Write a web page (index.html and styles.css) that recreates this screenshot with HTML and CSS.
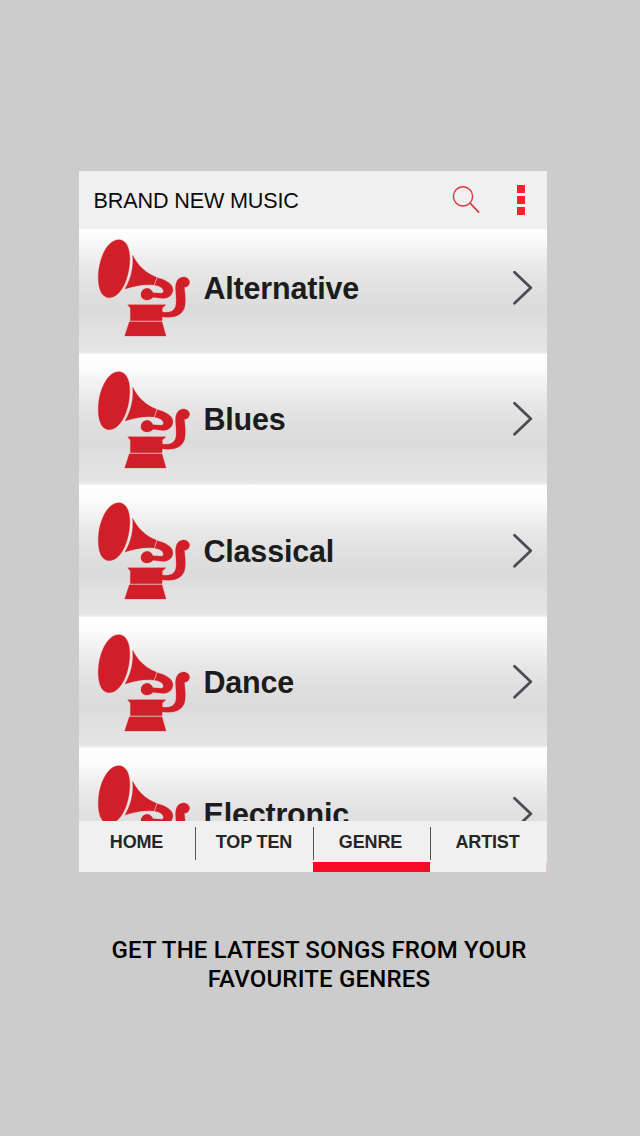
FILE: index.html
```html
<!DOCTYPE html>
<html lang="en">
<head>
<meta charset="utf-8">
<title>Brand New Music</title>
<link rel="stylesheet" href="styles.css">
</head>
<body>
<svg class="defs" aria-hidden="true">
  <symbol id="gramophone" viewBox="0 0 360 390">
    <g stroke="#eda9ac" stroke-width="3" stroke-linejoin="round" fill="#d01f28" paint-order="stroke">
      <path d="M104 44C126 46 137 74 134 113C130 170 104 218 72 218C46 218 36 181 41 136C48 82 74 42 104 44Z"/>
      <path d="M143 91C159 122 182 145 215 157L207 180C174 177 150 183 120 192C138 161 146 127 143 91Z"/>
      <path d="M217 158C246 165 264 178 264 195C262 214 246 222 229 220L204 217C199 223 191 226 184 225C173 224 167 216 168 207C169 197 177 190 187 190C194 190 200 195 204 203L228 205C235 204 237 199 234 194C231 187 221 182 209 181Z"/>
      <path d="M128 239H243L232 249V261C251 264 264 260 270 248C276 236 273 216 272 197C270 173 277 158 294 156C305 155 314 163 314 172C313 181 306 187 298 187C301 211 303 234 298 250C289 273 264 281 232 275L231 287H136V249Z"/>
      <path d="M133 290H231L243 333H119Z"/>
    </g>
  </symbol>
  <symbol id="chevron" viewBox="0 0 22 36">
    <path d="M2.5 2.3L18.8 17.8L2.5 33.3" fill="none" stroke="#4c4c55" stroke-width="2.8" stroke-linecap="round" stroke-linejoin="round"/>
  </symbol>
</svg>
<main class="screen">
  <section class="phone">
    <header class="bar">
      <h1 class="title">BRAND NEW MUSIC</h1>
      <svg class="search" viewBox="0 0 28 28"><g fill="none" stroke="#e0303c" stroke-width="1.4"><circle cx="11" cy="11.4" r="9.6"/><path d="M18 18L27 27.6" stroke-width="1.7"/></g></svg>
      <div class="more"><i class="dot"></i><i class="dot"></i><i class="dot"></i></div>
    </header>
    <div class="list">
      <div class="row"><svg class="icon"><use href="#gramophone"/></svg><span class="name">Alternative</span><svg class="go"><use href="#chevron"/></svg></div>
      <div class="row"><svg class="icon"><use href="#gramophone"/></svg><span class="name">Blues</span><svg class="go"><use href="#chevron"/></svg></div>
      <div class="row"><svg class="icon"><use href="#gramophone"/></svg><span class="name">Classical</span><svg class="go"><use href="#chevron"/></svg></div>
      <div class="row"><svg class="icon"><use href="#gramophone"/></svg><span class="name">Dance</span><svg class="go"><use href="#chevron"/></svg></div>
      <div class="row"><svg class="icon"><use href="#gramophone"/></svg><span class="name">Electronic</span><svg class="go"><use href="#chevron"/></svg></div>
    </div>
    <nav class="tabs">
      <div class="tab">HOME</div>
      <div class="tab">TOP TEN</div>
      <div class="tab active">GENRE</div>
      <div class="tab">ARTIST</div>
      <i class="edge"></i>
    </nav>
  </section>
  <p class="caption">GET THE LATEST SONGS FROM YOUR<br>FAVOURITE GENRES</p>
</main>
</body>
</html>
```
FILE: styles.css
```css
* { box-sizing: border-box; }
body {
  margin: 0;
  background: #ccc;
  font-family: "Liberation Sans", Arial, sans-serif;
}
.defs { display: none; }
.screen {
  height: 1136px;
  padding-top: 171px;
  display: flex;
  flex-direction: column;
  align-items: center;
}
.phone {
  width: 468px;
  height: 701px;
  margin-right: 14px;
  display: flex;
  flex-direction: column;
  overflow: hidden;
  background: #f0f0f0;
}
.bar {
  height: 58px;
  flex: none;
  display: flex;
  align-items: center;
  padding: 0 22px 0 14.5px;
}
.title {
  margin: 0;
  padding-top: 2px;
  flex: 1;
  font-size: 21.6px;
  font-weight: 400;
  letter-spacing: -0.15px;
  color: #0c0c0c;
}
.search { width: 28px; height: 28px; margin: 0 37px 3px 0; }
.more { display: grid; gap: 3px; margin-bottom: 1px; }
.dot { width: 8px; height: 8px; background: #fb2229; }
.list { height: 592px; flex: none; overflow: hidden; }
.row {
  height: 131.5px;
  display: flex;
  align-items: center;
  padding: 0 13px 0 6px;
  background: linear-gradient(#fff 0, #fdfdfd 10%, #f4f4f4 20%, #e6e6e6 38%, #dfdfdf 54%, #dbdbdb 68%, #e0e0e0 80%, #e5e5e5 98%, #f4f4f4 100%);
}
.row:first-child { margin-top: -7px; }
.icon { width: 120px; height: 130px; margin-top: 5px; }
.name {
  flex: 1;
  margin-left: -1.5px;
  padding-top: 1px;
  font-size: 30.5px;
  font-weight: 700;
  letter-spacing: -0.2px;
  color: #1c1c1c;
}
.go { width: 22px; height: 36px; }
.tabs {
  position: relative;
  height: 51px;
  flex: none;
  display: grid;
  grid-template-columns: 116px 118px 117px 117px;
}
.tab {
  position: relative;
  padding: 11px 2px 0 0;
  text-align: center;
  font-size: 18px;
  line-height: 21px;
  font-weight: 700;
  letter-spacing: -0.15px;
  color: #262626;
}
.tab:first-child { padding-right: 1px; }
.tab:nth-child(2) { padding-right: 0; }
.tab + .tab::before {
  content: "";
  position: absolute;
  left: 0;
  top: 6px;
  width: 1px;
  height: 33px;
  background: #555;
}
.active { border-bottom: 10px solid #f80b24; }
.edge {
  position: absolute;
  right: 0;
  bottom: 0;
  width: 1px;
  height: 10px;
  background: #f5c4c9;
}
.caption {
  margin: 64px 2px 0 0;
  font: 500 24px/29px Roboto, sans-serif;
  letter-spacing: 0.18px;
  text-align: center;
  color: #000;
}
```
